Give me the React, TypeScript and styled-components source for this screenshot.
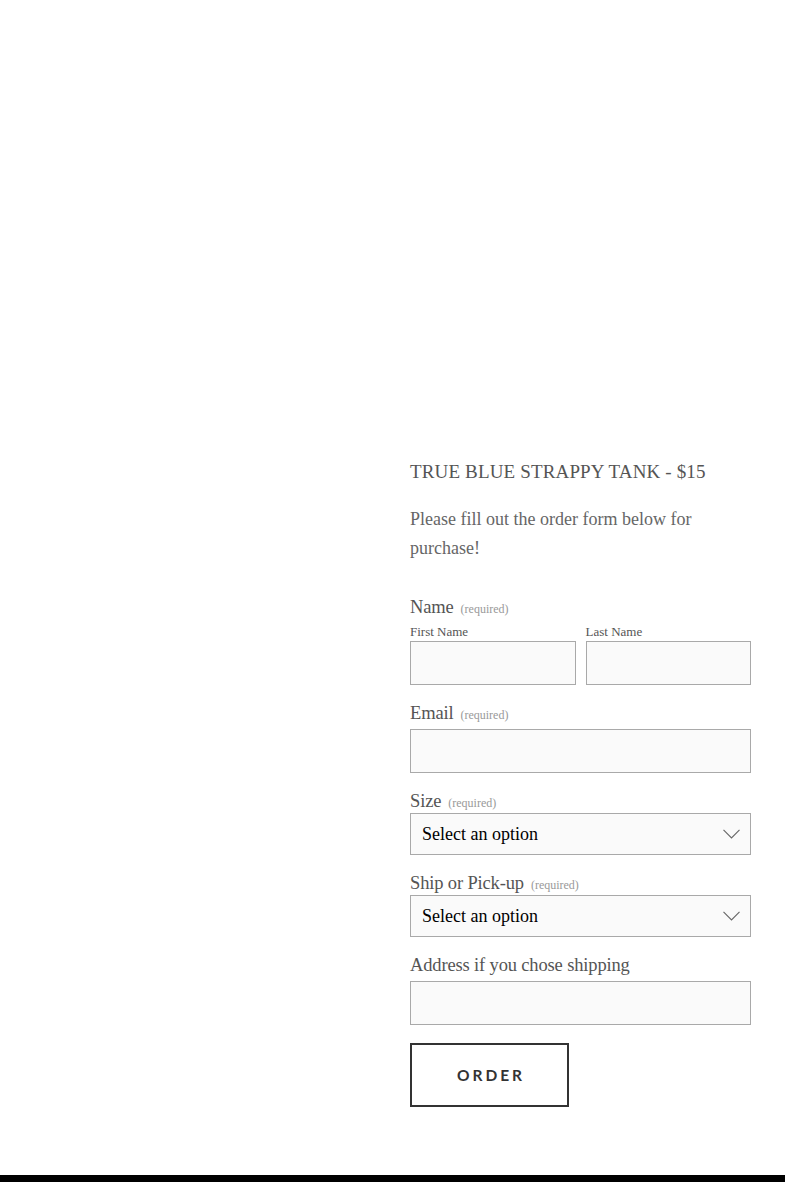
import React from 'react';
import styled, { createGlobalStyle } from 'styled-components';

const GlobalStyle = createGlobalStyle`
  html, body {
    margin: 0;
    padding: 0;
    background: #fff;
  }
  body {
    font-family: "Liberation Serif", "DejaVu Serif", serif;
    color: #555;
  }
`;

const serif = `"Liberation Serif", "DejaVu Serif", serif`;

const Page = styled.main`
  display: grid;
  grid-template-columns: 1fr 341px;
  column-gap: 34px;
  padding: 459px 34px 68px 0;
`;

const ImageArea = styled.div`
  background: #fff;
`;

const Details = styled.section`
  display: flex;
  flex-direction: column;
`;

const Title = styled.h1`
  margin: 0;
  font-family: ${serif};
  font-weight: 400;
  font-size: 19px;
  line-height: 26px;
  letter-spacing: 0.15px;
  color: #555;
`;

const Intro = styled.p`
  margin: 20px 0 32px;
  font-family: ${serif};
  font-size: 18px;
  line-height: 29px;
  color: #666;
`;

const Form = styled.form`
  display: flex;
  flex-direction: column;
`;

const Field = styled.div<{ $gap?: number }>`
  display: flex;
  flex-direction: column;
  margin-bottom: ${(p) => p.$gap ?? 16}px;
`;

const Label = styled.div<{ $space?: number }>`
  font-family: ${serif};
  font-size: 18.5px;
  line-height: 24px;
  height: 24px;
  letter-spacing: -0.15px;
  color: #555;
  margin-bottom: ${(p) => p.$space ?? 0}px;
`;

const Required = styled.span`
  font-size: 12px;
  line-height: 1;
  letter-spacing: 0;
  color: #999;
  margin-left: 7px;
`;

const Pair = styled.div`
  display: grid;
  grid-template-columns: 1fr 1fr;
  column-gap: 10px;
  margin-top: 5px;
`;

const SubField = styled.div`
  display: flex;
  flex-direction: column;
`;

const SubLabel = styled.div`
  font-family: ${serif};
  font-size: 13px;
  line-height: 16px;
  height: 16px;
  color: #555;
  margin-bottom: 1px;
`;

const Input = styled.div`
  box-sizing: border-box;
  height: 44px;
  background: #fafafa;
  border: 1px solid #a9a9a9;
`;

const Select = styled.div`
  box-sizing: border-box;
  height: 42px;
  background: #fafafa;
  border: 1px solid #a9a9a9;
  display: flex;
  align-items: center;
  justify-content: space-between;
  padding: 0 10px 0 11px;
  font-family: ${serif};
  font-size: 18px;
  color: #000;
`;

const Chevron = () => (
  <svg width="17" height="10" viewBox="0 0 17 10" fill="none">
    <path d="M0.5 0.8 L8.5 9 L16.5 0.8" stroke="#666" strokeWidth="1.1" />
  </svg>
);

const OrderButton = styled.button`
  align-self: flex-start;
  margin: 0;
  width: 159px;
  height: 64px;
  background: #fff;
  border: 2px solid #333;
  font-family: "Lato", "Open Sans", sans-serif;
  font-weight: 700;
  font-size: 15.5px;
  letter-spacing: 3px;
  color: #333;
  padding: 0 0 0 3px;
`;

const Footer = styled.footer`
  height: 40px;
  background: #000;
`;

const App: React.FC = () => {
  return (
    <>
      <GlobalStyle />
      <Page>
        <ImageArea />
        <Details>
          <Title>TRUE BLUE STRAPPY TANK - $15</Title>
          <Intro>Please fill out the order form below for purchase!</Intro>
          <Form onSubmit={(e) => e.preventDefault()}>
            <Field>
              <Label>
                Name<Required>(required)</Required>
              </Label>
              <Pair>
                <SubField>
                  <SubLabel>First Name</SubLabel>
                  <Input />
                </SubField>
                <SubField>
                  <SubLabel>Last Name</SubLabel>
                  <Input />
                </SubField>
              </Pair>
            </Field>
            <Field>
              <Label $space={4}>
                Email<Required>(required)</Required>
              </Label>
              <Input />
            </Field>
            <Field>
              <Label>
                Size<Required>(required)</Required>
              </Label>
              <Select>
                Select an option
                <Chevron />
              </Select>
            </Field>
            <Field>
              <Label>
                Ship or Pick-up<Required>(required)</Required>
              </Label>
              <Select>
                Select an option
                <Chevron />
              </Select>
            </Field>
            <Field $gap={18}>
              <Label $space={4}>Address if you chose shipping</Label>
              <Input />
            </Field>
            <OrderButton type="submit">ORDER</OrderButton>
          </Form>
        </Details>
      </Page>
      <Footer />
    </>
  );
};

export default App;
